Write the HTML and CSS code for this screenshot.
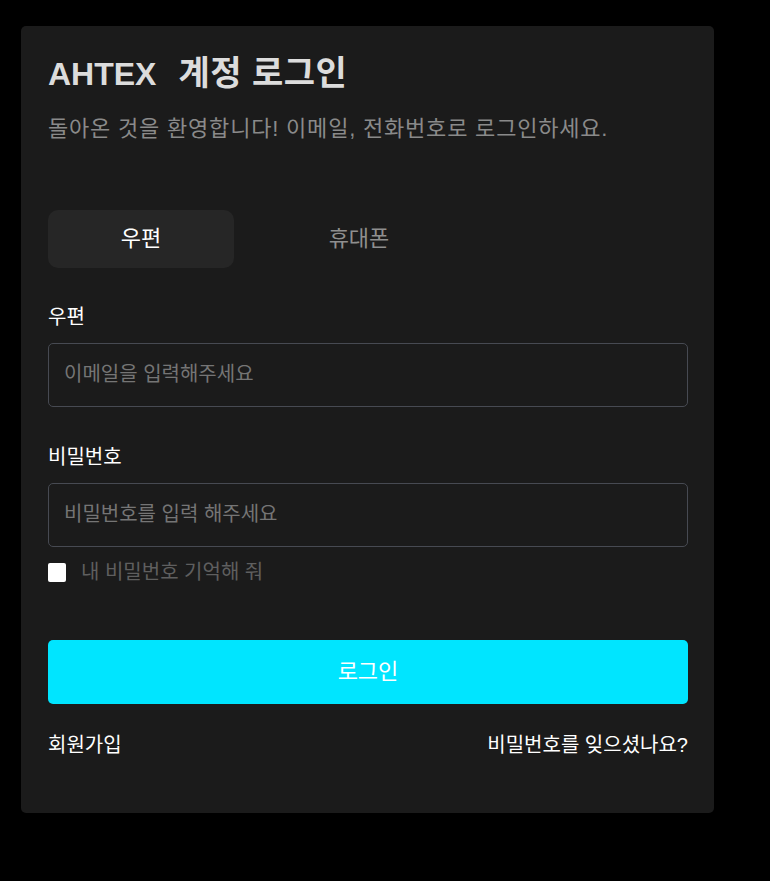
FILE: index.html
```html
<!DOCTYPE html>
<html lang="ko">
<head>
<meta charset="utf-8">
<title>AHTEX 계정 로그인</title>
<link rel="stylesheet" href="styles.css">
</head>
<body>
<div class="card">
  <h1 class="title"><span class="brand">AHTEX</span><span class="title-ko">계정 로그인</span></h1>
  <p class="subtitle">돌아온 것을 환영합니다! 이메일, 전화번호로 로그인하세요.</p>
  <div class="tabs">
    <div class="tab active">우편</div>
    <div class="tab">휴대폰</div>
  </div>
  <div class="field">
    <label class="label">우편</label>
    <div class="input"><span class="ph">이메일을 입력해주세요</span></div>
  </div>
  <div class="field field-pw">
    <label class="label">비밀번호</label>
    <div class="input"><span class="ph">비밀번호를 입력 해주세요</span></div>
  </div>
  <div class="remember">
    <span class="box"></span>
    <span class="remember-text">내 비밀번호 기억해 줘</span>
  </div>
  <div class="btn">로그인</div>
  <div class="links">
    <span>회원가입</span>
    <span>비밀번호를 잊으셨나요?</span>
  </div>
</div>
</body>
</html>
```
FILE: styles.css
```css
html, body {
  margin: 0;
  padding: 0;
  background: #000;
}
body {
  padding: 26px 0 0 21px;
  font-family: "Liberation Sans", "Noto Sans CJK KR", sans-serif;
}
.card {
  width: 640px;
  background: #1b1b1b;
  border-radius: 5px;
  padding: 27px 26px 56px 27px;
}
.title {
  margin: 0;
  font-size: 32px;
  font-weight: 700;
  line-height: 40px;
  color: #dcdcdc;
  display: flex;
  align-items: baseline;
}
.brand {
  margin-right: 22px;
}
.title-ko {
  font-size: 34px;
  letter-spacing: 0.5px;
}
.subtitle {
  margin: 20px 0 0;
  font-size: 22px;
  line-height: 30px;
  letter-spacing: 0.8px;
  color: #8a8a8a;
}
.tabs {
  display: flex;
  gap: 32px;
  margin-top: 66px;
}
.tab {
  width: 186px;
  height: 58px;
  display: flex;
  align-items: center;
  justify-content: center;
  border-radius: 10px;
  font-size: 22px;
  line-height: 26px;
  padding-bottom: 1px;
  box-sizing: border-box;
  color: #8f8f8f;
}
.tab.active {
  background: #262626;
  color: #fff;
}
.field {
  margin-top: 37px;
}
.field-pw {
  margin-top: 38px;
}
.label {
  display: block;
  font-size: 20px;
  line-height: 24px;
  color: #fff;
  margin-bottom: 14px;
}
.input {
  height: 62px;
  border: 1px solid #474a52;
  border-radius: 5px;
  display: flex;
  align-items: center;
  padding: 0 15px 3px;
  box-sizing: border-box;
  height: 64px;
}
.ph {
  font-size: 20px;
  line-height: 24px;
  color: #757575;
}
.remember {
  display: flex;
  align-items: center;
  gap: 15px;
  margin-top: 13px;
  height: 24px;
}
.box {
  width: 18px;
  height: 19px;
  background: #fff;
  border-radius: 2px;
}
.remember-text {
  font-size: 20px;
  line-height: 24px;
  color: #5f5f5f;
}
.btn {
  margin-top: 56px;
  height: 64px;
  border-radius: 5px;
  background: #00e5ff;
  color: #fff;
  font-size: 22px;
  line-height: 26px;
  display: flex;
  align-items: center;
  justify-content: center;
}
.links {
  display: flex;
  justify-content: space-between;
  margin-top: 29px;
  font-size: 20px;
  line-height: 24px;
  color: #fff;
}
```
